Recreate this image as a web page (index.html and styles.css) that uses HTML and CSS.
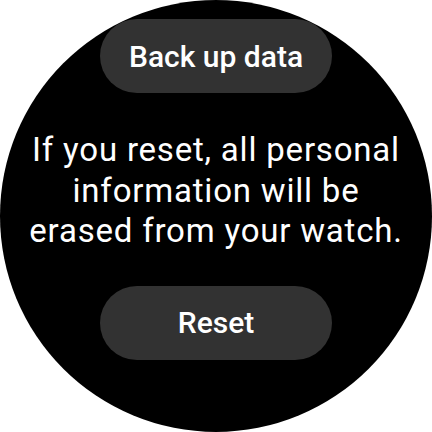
FILE: index.html
```html
<!DOCTYPE html>
<html>
<head>
<meta charset="utf-8">
<link rel="stylesheet" href="styles.css">
</head>
<body>
<div class="watch">
  <div class="pill pill-top">Back up data</div>
  <p class="message">If you reset, all personal information will be erased from your watch.</p>
  <div class="pill pill-reset">Reset</div>
</div>
</body>
</html>
```
FILE: styles.css
```css
html, body {
  margin: 0;
  padding: 0;
  background: #ffffff;
}
.watch {
  width: 432px;
  height: 432px;
  border-radius: 50%;
  background: #000000;
  overflow: hidden;
  display: flex;
  flex-direction: column;
  align-items: center;
  padding-top: 19px;
  box-sizing: border-box;
  font-family: Roboto, "Noto Sans", sans-serif;
  color: #ffffff;
}
.pill {
  width: 232px;
  height: 74px;
  border-radius: 37px;
  background: #323232;
  display: flex;
  align-items: center;
  justify-content: center;
  font-size: 30px;
  font-weight: 500;
  flex-shrink: 0;
}
.message {
  margin: 37px 0 0 0;
  width: 382px;
  text-align: center;
  font-size: 33px;
  letter-spacing: 0.8px;
  line-height: 40.5px;
  font-weight: 400;
}
.pill-reset {
  margin-top: 34px;
}
```
